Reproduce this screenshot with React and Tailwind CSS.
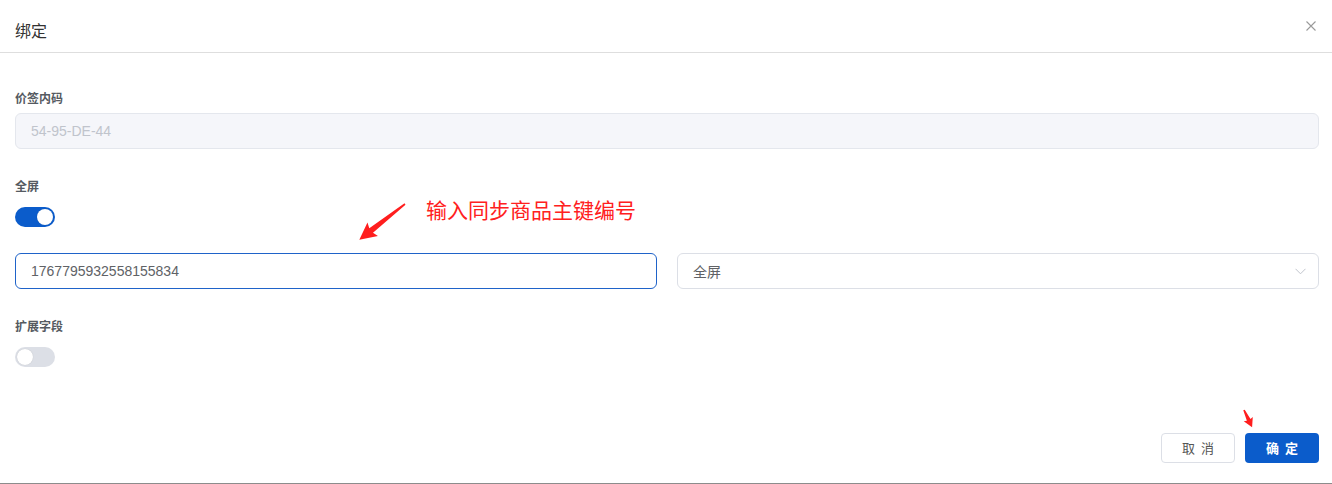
import React from "react";

const FONT = { fontFamily: '"Liberation Sans", "Noto Sans CJK SC", sans-serif' };
const CJK = { fontFamily: '"Noto Sans CJK SC", "Liberation Sans", sans-serif' };

function Label({ children }) {
  return (
    <div className="text-[12px] leading-[20px] font-bold text-[#555a61]" style={CJK}>
      {children}
    </div>
  );
}

function Switch({ on }) {
  return (
    <div
      className={
        "w-[40px] h-[20px] rounded-full flex items-center px-[2px] " +
        (on ? "bg-[#0b5ccb] justify-end" : "bg-[#dcdfe6] justify-start")
      }
    >
      <div className="w-[16px] h-[16px] rounded-full bg-white shadow-[0_0_1px_rgba(0,0,0,0.2)]" />
    </div>
  );
}

export default function App() {
  return (
    <div
      className="relative w-[1332px] h-[484px] bg-white flex flex-col border-b border-[#8c8c8c] overflow-hidden"
      style={FONT}
    >
      {/* header */}
      <div className="h-[53px] shrink-0 border-b border-[#dedede] flex items-center justify-between pl-[15px] pr-[16px] pt-[8px]">
        <div className="text-[16px] text-[#333] leading-[20px]" style={CJK}>
          绑定
        </div>
        <svg width="10" height="10" viewBox="0 0 10 10" className="-mt-[8px]">
          <path d="M0.5 0.5 L9.5 9.5 M9.5 0.5 L0.5 9.5" stroke="#9a9a9a" strokeWidth="1.1" fill="none" />
        </svg>
      </div>

      {/* body */}
      <div className="flex flex-col pl-[15px] pr-[13px]">
        <div className="mt-[35px]">
          <Label>价签内码</Label>
        </div>
        <div className="mt-[5px] h-[36px] rounded-[6px] border border-[#e4e7ed] bg-[#f5f6fa] flex items-center pl-[15px] text-[14px] text-[#c0c4cc]">
          54-95-DE-44
        </div>

        <div className="mt-[27px]">
          <Label>全屏</Label>
        </div>
        <div className="mt-[11px]">
          <Switch on />
        </div>

        <div className="mt-[26px] h-[36px] flex justify-between">
          <div className="w-[642px] rounded-[6px] border border-[#1f63c9] flex items-center pl-[15px] text-[14px] text-[#606266]">
            1767795932558155834
          </div>
          <div className="w-[642px] rounded-[6px] border border-[#dcdfe6] flex items-center justify-between pl-[15px] pr-[12px] text-[14px] text-[#606266]">
            <span style={CJK}>全屏</span>
            <svg width="11" height="7" viewBox="0 0 11 7">
              <path d="M0.5 0.8 L5.5 5.8 L10.5 0.8" stroke="#c0c4cc" strokeWidth="1" fill="none" />
            </svg>
          </div>
        </div>

        <div className="mt-[27px]">
          <Label>扩展字段</Label>
        </div>
        <div className="mt-[11px]">
          <Switch on={false} />
        </div>

        <div className="mt-[66px] flex justify-end gap-[10px]">
          <button className="w-[74px] h-[30px] rounded-[4px] border border-[#dcdfe6] bg-white flex items-center justify-center gap-[6px] text-[13px] text-[#555]" style={CJK}>
            <span>取</span>
            <span>消</span>
          </button>
          <button className="w-[74px] h-[30px] rounded-[4px] bg-[#0b5ccb] flex items-center justify-center gap-[6px] text-[13px] font-bold text-white" style={CJK}>
            <span>确</span>
            <span>定</span>
          </button>
        </div>
      </div>

      {/* annotations */}
      <div
        className="absolute left-[426px] top-[196px] text-[21px] leading-[26px] text-[#ff2020] whitespace-nowrap"
        style={CJK}
      >
        输入同步商品主键编号
      </div>
      <svg className="absolute left-0 top-0 pointer-events-none" width="1332" height="484">
        <polygon
          transform="translate(405,204) rotate(141.95)"
          points="0,-0.8 43,-3 41,-8.5 58,0 41,8.5 43,3 0,0.8"
          fill="#ff1e1e"
        />
        <polygon
          transform="translate(1244,410) rotate(64.8)"
          points="0,-0.8 11,-2 10,-5 19,0 10,5 11,2 0,0.8"
          fill="#ff1e1e"
        />
      </svg>
    </div>
  );
}
